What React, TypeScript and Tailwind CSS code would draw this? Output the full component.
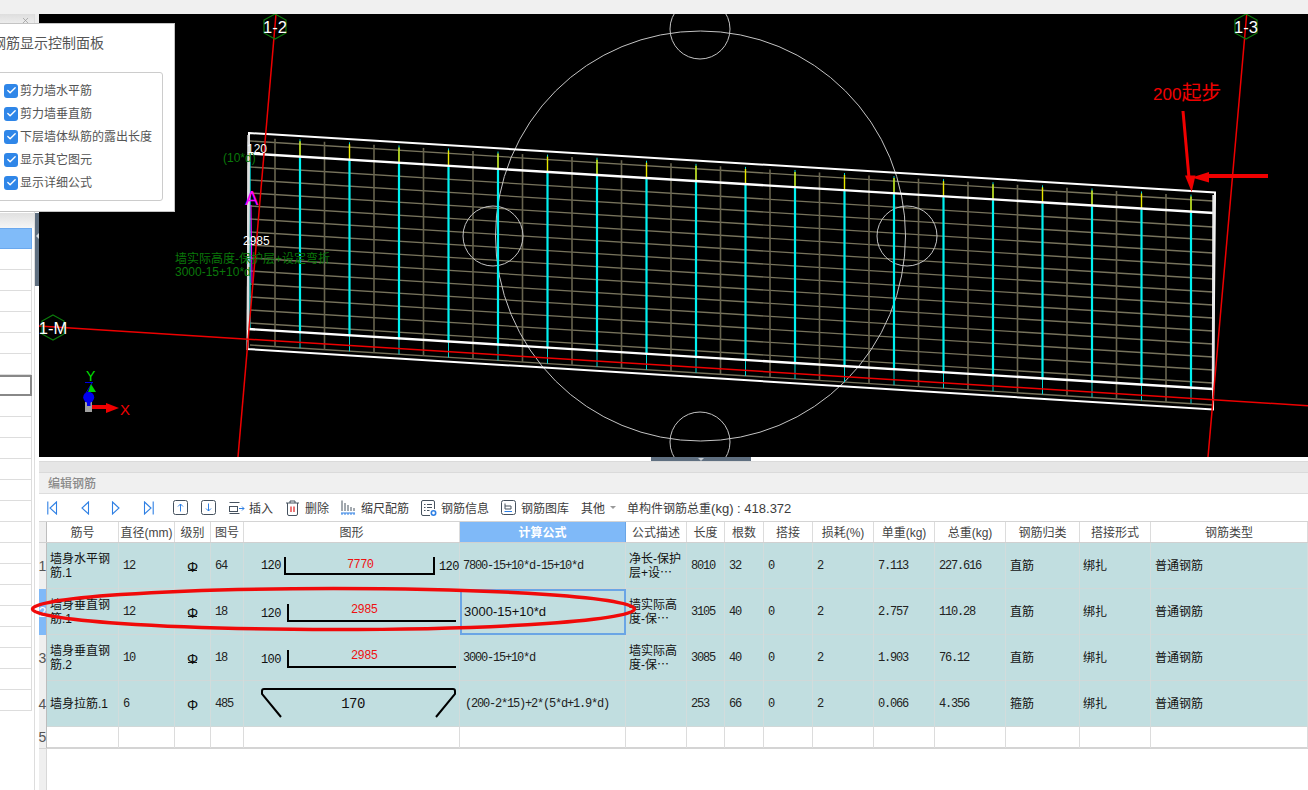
import React from "react";
import { Check, X } from "lucide-react";

const slope = 0.0621;
const topY = (x: number) => 133 + (x - 248) * slope;
const horizontals = [8, 34, 47, 60, 73, 86, 99, 112, 125, 138, 151, 164, 177, 190, 212];
const doubled = [1042, 1141];

function Hex({ cx, cy, label }: { cx: number; cy: number; label: string }) {
  const p = [[0, -12.5], [11, -6.5], [11, 6.5], [0, 12.5], [-11, 6.5], [-11, -6.5]]
    .map(([a, b]) => `${cx + a},${cy + b}`)
    .join(" ");
  return (
    <g>
      <polygon points={p} fill="none" stroke="#0c7c0c" strokeWidth="1.2" />
      <text x={cx} y={cy + 6.5} textAnchor="middle" fontSize="16.5" fill="#ffffff" fontFamily="'Liberation Sans',sans-serif">
        {label}
      </text>
    </g>
  );
}

function Drawing() {
  const cyan = Array.from({ length: 19 }, (_, i) => 300 + i * 49.5);
  const tan = Array.from({ length: 19 }, (_, i) => 275 + i * 49.5);
  return (
    <svg viewBox="39 14 1269 443" className="block w-[1269px] h-[443px] bg-black">
      {horizontals.map((o) => (
        <line key={o} x1="250" y1={133 + o} x2="1213" y2={133 + o + 60} stroke="#77735c" strokeWidth="1.3" />
      ))}
      {tan.map((x) => (
        <line key={x} x1={x} y1={topY(x) + 4} x2={x} y2={topY(x) + 212} stroke="#68644f" strokeWidth="1.6" />
      ))}
      <g fill="none" stroke="#c4c4c4" strokeWidth="1">
        <circle cx="700.5" cy="236" r="205" />
        <circle cx="700" cy="29" r="30" />
        <circle cx="700" cy="442" r="30" />
        <circle cx="493" cy="236" r="30" />
        <circle cx="907" cy="236" r="30" />
      </g>
      {cyan.map((x) => (
        <g key={x}>
          <line x1={x} y1={topY(x) + 3} x2={x} y2={topY(x) + 212} stroke="#00d8d8" strokeWidth="1" />
          <line x1={x} y1={topY(x) + 5} x2={x} y2={topY(x) + 20} stroke="#e8e800" strokeWidth="1.4" />
          {doubled.includes(x) ? (
            <g stroke="#00e4e4" strokeWidth="1">
              <line x1={x - 1} y1={topY(x) + 21} x2={x - 1} y2={topY(x) + 197} />
              <line x1={x + 1} y1={topY(x) + 21} x2={x + 1} y2={topY(x) + 197} />
            </g>
          ) : (
            <line x1={x} y1={topY(x) + 21} x2={x} y2={topY(x) + 197} stroke="#00f0f0" strokeWidth="2.2" />
          )}
        </g>
      ))}
      <line x1="250" y1="155" x2="250" y2="330" stroke="#00d8d8" strokeWidth="1.4" />
      <g stroke="#ffffff" fill="none">
        <polygon points="249,133 1215,192.5 1213,409.5 247.5,349" strokeWidth="2" />
        <line x1="249" y1="153.5" x2="1214" y2="213" strokeWidth="2.4" />
        <line x1="248" y1="329" x2="1213" y2="389" strokeWidth="2.4" />
        <line x1="1213.5" y1="195" x2="1213" y2="389" strokeWidth="2.4" stroke="#e8e8e8" />
        <line x1="248.5" y1="135" x2="248" y2="330" strokeWidth="2.4" stroke="#dddddd" />
      </g>
      <line x1="251" y1="205" x2="252" y2="283" stroke="#ff00ff" strokeWidth="1" />
      <g stroke="#ee0000" strokeWidth="1.5">
        <line x1="276" y1="14" x2="238" y2="457" />
        <line x1="1246.7" y1="14" x2="1208" y2="457" />
        <line x1="39" y1="326" x2="1308" y2="405.7" />
      </g>
      <Hex cx={275} cy={26.5} label="1-2" />
      <Hex cx={1246} cy={26.5} label="1-3" />
      <Hex cx={53} cy={327.5} label="1-M" />
      <g fontFamily="'Liberation Sans','Noto Sans CJK SC',sans-serif" fontSize="12">
        <text x="247" y="153" fill="#ffffff">120</text>
        <text x="243" y="245" fill="#ffffff">2985</text>
        <text x="223" y="162" fill="#0a780a">(10*d)</text>
        <text x="175" y="263" fill="#0a780a">墙实际高度-保护层+设定弯折</text>
        <text x="175" y="276" fill="#0a780a">3000-15+10*d</text>
        <text x="245" y="205" fill="#ff00ff" fontSize="20">A</text>
        <text x="1153" y="100" fill="#f00000">
          <tspan fontSize="17">200</tspan>
          <tspan fontSize="20">起步</tspan>
        </text>
        <text x="120" y="415" fill="#f00000" fontSize="15">X</text>
        <text x="86" y="381" fill="#00e000" fontSize="14">Y</text>
      </g>
      <g>
        <line x1="85" y1="382.5" x2="93" y2="382.5" stroke="#0000e0" strokeWidth="1" />
        <line x1="92" y1="383" x2="86" y2="393" stroke="#0000e0" strokeWidth="1" />
        <path d="M91 384 L96 392 L88 392 Z" fill="#00d000" />
        <rect x="85" y="402" width="7" height="10" fill="#a0a0a0" />
        <rect x="87" y="398" width="3.5" height="8" fill="#0000f0" />
        <circle cx="88.7" cy="397.3" r="5.5" fill="#0000f0" />
        <rect x="92" y="405" width="15" height="4" fill="#f00000" />
        <path d="M106 403 L119 408 L106 413 Z" fill="#f00000" />
      </g>
      <g fill="#f00000" stroke="none">
        <polygon points="1181.5,111 1184.5,111 1190.5,178 1187.5,178" />
        <polygon points="1185,175.5 1195.5,175.5 1191.7,192" />
        <rect x="1208" y="174" width="60" height="4" />
        <polygon points="1209,172 1209,182.5 1191.7,177.5" />
      </g>
    </svg>
  );
}

const blue = "#2f80e4";
const dark = "#46525f";

function NavIcon({ dir, bar }: { dir: "l" | "r"; bar: boolean }) {
  return (
    <svg width="11" height="14" viewBox="0 0 11 14" fill="none" stroke={blue} strokeWidth="1.1" className="block shrink-0">
      {dir === "l" ? <path d="M9.5 1 L3 7 L9.5 13 Z" /> : <path d="M1.5 1 L8 7 L1.5 13 Z" />}
      {bar && (dir === "l" ? <path d="M0.8 0.5 V13.5" /> : <path d="M10.2 0.5 V13.5" />)}
    </svg>
  );
}

function BoxArrow({ up }: { up: boolean }) {
  return (
    <svg width="15" height="15" viewBox="0 0 15 15" fill="none" className="block shrink-0">
      <rect x="0.5" y="0.5" width="14" height="14" rx="2" stroke={dark} />
      {up ? (
        <path d="M7.5 11.5 V4 M5 6.5 L7.5 4 L10 6.5" stroke={blue} />
      ) : (
        <path d="M7.5 3.5 V11 M5 8.5 L7.5 11 L10 8.5" stroke={blue} />
      )}
    </svg>
  );
}

function InsertIcon() {
  return (
    <svg width="16" height="14" viewBox="0 0 16 14" fill="none" className="block shrink-0">
      <path d="M0.5 1.5 H10.5" stroke={dark} />
      <rect x="0.5" y="5.5" width="8" height="5" stroke={dark} />
      <path d="M0.5 12.5 H10.5" stroke={dark} />
      <path d="M10 7.5 H15 M13 5.5 L15 7.5 L13 9.5" stroke={blue} />
    </svg>
  );
}

function TrashIcon() {
  return (
    <svg width="13" height="16" viewBox="0 0 13 16" fill="none" className="block shrink-0">
      <path d="M0 3 H13 M4 3 V1 H9 V3" stroke={dark} />
      <path d="M1.5 3 V14 Q1.5 15.5 3 15.5 H10 Q11.5 15.5 11.5 14 V3" stroke={dark} />
      <path d="M5 6.5 V12 M8 6.5 V12" stroke="#e02020" strokeWidth="1.2" />
    </svg>
  );
}

function ScaleIcon() {
  return (
    <svg width="14" height="15" viewBox="0 0 14 15" fill="none" className="block shrink-0">
      <path d="M1 0.5 V11 M4 3 V11 M7 5 V11 M10 7 V11 M13 8 V11" stroke={dark} />
      <path d="M0 13 H14 M1 13 V15 M4 13 V15 M7 13 V15 M10 13 V15 M13 13 V15" stroke={blue} />
    </svg>
  );
}

function InfoIcon() {
  return (
    <svg width="16" height="16" viewBox="0 0 16 16" fill="none" className="block shrink-0">
      <path d="M9 15.5 H2 Q0.5 15.5 0.5 14 V2 Q0.5 0.5 2 0.5 H12 Q13.5 0.5 13.5 2 V9" stroke={dark} />
      <path d="M3 4.5 H4.5 M6 4.5 H11 M3 7.5 H4.5 M6 7.5 H11 M3 10.5 H4.5 M6 10.5 H8.5" stroke={dark} />
      <circle cx="12.5" cy="13" r="2.2" stroke={blue} strokeWidth="1.6" />
    </svg>
  );
}

function LibIcon() {
  return (
    <svg width="15" height="15" viewBox="0 0 15 15" fill="none" className="block shrink-0">
      <rect x="0.5" y="0.5" width="14" height="14" rx="2" stroke={dark} />
      <path d="M4 3.5 V9 H10 V6 H4" stroke={dark} />
      <path d="M3.5 11.5 H11" stroke={blue} />
    </svg>
  );
}

function ToolLabel({ children }: { children: React.ReactNode }) {
  return <span className="mt-[2px] text-[12px] leading-[16px] text-[#3c3c3c] whitespace-nowrap">{children}</span>;
}

function Toolbar() {
  return (
    <div className="h-[28px] flex items-center bg-white border-b border-[#d4d4d4] pl-[8px]">
      <NavIcon dir="l" bar />
      <div className="ml-[21px]"><NavIcon dir="l" bar={false} /></div>
      <div className="ml-[21px]"><NavIcon dir="r" bar={false} /></div>
      <div className="ml-[21px]"><NavIcon dir="r" bar /></div>
      <div className="ml-[19px]"><BoxArrow up /></div>
      <div className="ml-[13px]"><BoxArrow up={false} /></div>
      <div className="ml-[13px] mr-[4px]"><InsertIcon /></div>
      <ToolLabel>插入</ToolLabel>
      <div className="ml-[13px] mr-[6px]"><TrashIcon /></div>
      <ToolLabel>删除</ToolLabel>
      <div className="ml-[12px] mr-[6px]"><ScaleIcon /></div>
      <ToolLabel>缩尺配筋</ToolLabel>
      <div className="ml-[12px] mr-[4px]"><InfoIcon /></div>
      <ToolLabel>钢筋信息</ToolLabel>
      <div className="ml-[12px] mr-[5px]"><LibIcon /></div>
      <ToolLabel>钢筋图库</ToolLabel>
      <div className="ml-[12px] flex"><ToolLabel>其他</ToolLabel></div>
      <div className="ml-[5px] w-0 h-0 border-l-[3px] border-r-[3px] border-t-[3px] border-l-transparent border-r-transparent border-t-[#999999]" />
      <div className="ml-[11px] mt-[2px] flex items-baseline whitespace-nowrap text-[#3c3c3c]">
        <span className="text-[12px]">单构件钢筋总重</span>
        <span className="text-[13px]">(kg) : 418.372</span>
      </div>
    </div>
  );
}

const gridCols =
  "grid grid-cols-[8px_72px_56px_36px_33px_216px_166px_61px_38px_39px_49px_61px_61px_71px_74px_71px_157px]";

const headers = ["筋号", "直径(mm)", "级别", "图号", "图形", "计算公式", "公式描述", "长度", "根数", "搭接", "损耗(%)", "单重(kg)", "总重(kg)", "钢筋归类", "搭接形式", "钢筋类型"];

function Num({ children }: { children: React.ReactNode }) {
  return (
    <div className="h-full flex items-center pl-[4px] border-r border-[#d2dcdc] font-['Liberation_Mono',monospace] text-[12px] tracking-[-1.2px] text-[#222222] whitespace-pre">
      {children}
    </div>
  );
}

function Txt({ children, pl = false }: { children: React.ReactNode; pl?: boolean }) {
  return (
    <div className={pl ? "h-full flex items-center pl-[3px] border-r border-[#d2dcdc] text-[12px] leading-[14px] text-[#111111] whitespace-pre-line" : "h-full flex items-center pl-[4px] border-r border-[#d2dcdc] text-[12px] leading-[14px] text-[#111111]"}>
      <div>{children}</div>
    </div>
  );
}

function Grade({ bar }: { bar: boolean }) {
  return (
    <div className="h-full flex items-center justify-center border-r border-[#d2dcdc] text-[#111111]">
      <span className="relative mt-[2px] text-[14px] leading-[14px] font-['Liberation_Sans',sans-serif]">
        Φ
        {bar && <span className="absolute left-[1px] right-[1px] bottom-[3px] h-px bg-[#111111]" />}
      </span>
    </div>
  );
}

const dimText = "'Liberation Mono',monospace";

function DimText({ x, y, fill = "#111111", children }: { x: number; y: number; fill?: string; children: React.ReactNode }) {
  return (
    <text x={x} y={y} fontSize="12" letterSpacing="-0.6" fontFamily={dimText} fill={fill}>
      {children}
    </text>
  );
}

function Shape({ kind }: { kind: number }) {
  return (
    <div className="h-full border-r border-[#d2dcdc]">
      <svg width="216" height="46" viewBox="0 0 216 46" fill="none" className="block">
        {kind === 1 && (
          <g>
            <DimText x={17} y={26}>120</DimText>
            <path d="M41 14 V31 H190 V14" stroke="#000" strokeWidth="2" />
            <DimText x={103} y={25} fill="#ee1111">7770</DimText>
            <DimText x={195} y={27}>120</DimText>
          </g>
        )}
        {kind === 2 && (
          <g>
            <DimText x={17} y={28}>120</DimText>
            <path d="M44 15 V32 H212" stroke="#000" strokeWidth="2" />
            <DimText x={107} y={24} fill="#ee1111">2985</DimText>
          </g>
        )}
        {kind === 3 && (
          <g>
            <DimText x={17} y={28}>100</DimText>
            <path d="M44 15 V32 H212" stroke="#000" strokeWidth="2" />
            <DimText x={107} y={24} fill="#ee1111">2985</DimText>
          </g>
        )}
        {kind === 4 && (
          <g>
            <path d="M37 36 L18 13 V10 Q18 8 20 8 H209 Q211 8 211 10 V13 L192 36" stroke="#000" strokeWidth="2" />
            <text x="109" y="27" textAnchor="middle" fontSize="14" letterSpacing="-0.6" fontFamily={dimText} fill="#111111">170</text>
          </g>
        )}
      </svg>
    </div>
  );
}

const rows = [
  { no: "1", name: "墙身水平钢筋.1", d: "12", bar: true, fig: "64", kind: 1, f: "7800-15+10*d-15+10*d", desc: "净长-保护\n层+设⋯", len: "8010", cnt: "32", w1: "7.113", w2: "227.616", c1: "直筋" },
  { no: "2", name: "墙身垂直钢筋.1", d: "12", bar: true, fig: "18", kind: 2, f: "3000-15+10*d", desc: "墙实际高\n度-保⋯", len: "3105", cnt: "40", w1: "2.757", w2: "110.28", c1: "直筋" },
  { no: "3", name: "墙身垂直钢筋.2", d: "10", bar: true, fig: "18", kind: 3, f: "3000-15+10*d", desc: "墙实际高\n度-保⋯", len: "3085", cnt: "40", w1: "1.903", w2: "76.12", c1: "直筋" },
  { no: "4", name: "墙身拉筋.1", d: "6", bar: false, fig: "485", kind: 4, f: "(200-2*15)+2*(5*d+1.9*d)", desc: "", len: "253", cnt: "66", w1: "0.066", w2: "4.356", c1: "箍筋" },
];

function Gutter({ children, active = false }: { children?: React.ReactNode; active?: boolean }) {
  return (
    <div className={active ? "h-full flex items-center justify-center bg-[#7fb9f8] border-r border-[#bdbdbd] text-[14px] text-white font-['Liberation_Sans',sans-serif]" : "h-full flex items-center justify-center bg-[#efefef] border-r border-[#bdbdbd] text-[14px] text-[#555555] font-['Liberation_Sans',sans-serif]"}>
      {children}
    </div>
  );
}

function Table() {
  return (
    <div className="flex-1 flex flex-col bg-white relative">
      <div className={`${gridCols} h-[21px] border-b border-[#d0d0d0]`}>
        <Gutter />
        {headers.map((h, i) =>
          i === 5 ? (
            <div key={h} className="h-full flex items-center justify-center pt-[2px] bg-[#7fb9f8] text-white font-bold text-[12px] border-r border-[#6aa5e5]">{h}</div>
          ) : (
            <div key={h} className="h-full flex items-center justify-center pt-[2px] border-r border-[#dcdcdc] text-[12px] text-[#444444] whitespace-nowrap">{h}</div>
          )
        )}
      </div>
      {rows.map((r) => (
        <div key={r.no} className={`${gridCols} h-[46px] bg-[#c1dee0] border-b border-[#d0d8d8]`}>
          <Gutter active={r.no === "2"}>{r.no}</Gutter>
          <Txt pl>{r.name}</Txt>
          <Num>{r.d}</Num>
          <Grade bar={r.bar} />
          <Num>{r.fig}</Num>
          <Shape kind={r.kind} />
          {r.no === "2" ? (
            <div className="h-full flex items-center pl-[2px] border-2 border-[#6aa5e5] text-[13px] text-[#111111] font-['Liberation_Sans',sans-serif]">{r.f}</div>
          ) : (
            <div className={r.no === "4" ? "h-full flex items-center pl-[5px] border-r border-[#d2dcdc] font-['Liberation_Mono',monospace] text-[12px] tracking-[-1.2px] text-[#222222] whitespace-pre" : "h-full flex items-center pl-[3px] border-r border-[#d2dcdc] font-['Liberation_Mono',monospace] text-[12px] tracking-[-1.2px] text-[#222222] whitespace-pre"}>{r.f}</div>
          )}
          <Txt pl>{r.desc}</Txt>
          <Num>{r.len}</Num>
          <Num>{r.cnt}</Num>
          <Num>0</Num>
          <Num>2</Num>
          <Num>{r.w1}</Num>
          <Num>{r.w2}</Num>
          <Txt>{r.c1}</Txt>
          <Txt pl>绑扎</Txt>
          <Txt>普通钢筋</Txt>
        </div>
      ))}
      <div className={`${gridCols} h-[22px] border-b-2 border-[#d4d4d4]`}>
        <Gutter>5</Gutter>
        {headers.map((h) => (
          <div key={h} className="h-full border-r border-[#dcdcdc]" />
        ))}
      </div>
      <div className="flex-1 w-[8px] bg-[#efefef] border-r border-[#d8d8d8]" />
    </div>
  );
}

const popupItems = ["剪力墙水平筋", "剪力墙垂直筋", "下层墙体纵筋的露出长度", "显示其它图元", "显示详细公式"];

function Popup() {
  return (
    <div className="absolute left-0 top-[23px] w-[175px] h-[189px] bg-white border-r border-y border-[#c4c4c4] overflow-hidden">
      <div className="ml-[-8px] mt-[9px] text-[14px] leading-[20px] text-[#555555] whitespace-nowrap">钢筋显示控制面板</div>
      <div className="ml-[-10px] mt-[19px] w-[173px] h-[129px] border border-[#cccccc] rounded-[3px] pt-[6px] pl-[13px] flex flex-col">
        {popupItems.map((t) => (
          <div key={t} className="h-[23px] flex items-center gap-[2px] shrink-0">
            <span className="w-[14px] h-[14px] rounded-[3px] bg-[#2f86e8] flex items-center justify-center">
              <Check size={11} strokeWidth={3} color="#ffffff" />
            </span>
            <span className="text-[12px] text-[#555555] whitespace-nowrap">{t}</span>
          </div>
        ))}
      </div>
    </div>
  );
}

function LeftPanel() {
  const listRows = Array.from({ length: 22 }, (_, i) => i);
  return (
    <div className="w-[39px] shrink-0 flex bg-white">
      <div className="w-[35px] flex flex-col border-r border-[#dddddd]">
        <div className="h-[9px] bg-gradient-to-b from-[#dedede] to-[#ececec] flex justify-end items-start pt-[2px] pr-[4px]">
          <X size={9} color="#999999" />
        </div>
        <div className="h-[190px]" />
        <div className="h-[15px] bg-gradient-to-b from-[#e0e0e0] to-[#f6f6f6]" />
        <div className="h-[21px] w-[32px] bg-[#80bbf9] border-y border-r border-[#6aa8ee]" />
        {listRows.map((i) =>
          i === 6 ? (
            <div key={i} className="h-[21px] w-[32px] border-y-2 border-r-2 border-[#888888]" />
          ) : (
            <div key={i} className="h-[21px] w-[32px] border-b border-r border-[#dddddd]" />
          )
        )}
        <div className="flex-1 w-[32px]" />
      </div>
      <div className="w-[4px] flex flex-col">
        <div className="h-[9px] bg-[#ececec]" />
        <div className="h-[190px]" />
        <div className="h-[73px] bg-[#5f6f80] flex flex-col items-end pt-[20px]">
          <div className="w-0 h-0 border-y-[3px] border-r-[3px] border-y-transparent border-r-[#d8dde2]" />
        </div>
      </div>
    </div>
  );
}

export default function App() {
  return (
    <div className="relative w-[1308px] h-[790px] overflow-hidden bg-white font-['Liberation_Sans','Noto_Sans_CJK_SC',sans-serif]">
      <div className="h-[14px] bg-[#f0f0f0]" />
      <div className="flex h-[776px]">
        <LeftPanel />
        <div className="flex-1 flex flex-col min-w-0">
          <Drawing />
          <div className="h-[4px] bg-white pl-[612px]">
            <div className="w-[100px] h-[4px] bg-[#5f6f80] flex justify-center">
              <div className="w-0 h-0 mt-[1px] border-x-[3px] border-t-[3px] border-x-transparent border-t-[#c8ced4]" />
            </div>
          </div>
          <div className="h-[12px] bg-[#e6e6e6] border-y border-[#dadada]" />
          <div className="h-[21px] bg-[#f0f0f0] border-b border-[#dddddd] pl-[9px] pt-[2px] flex items-center text-[12px] text-[#8a8a8a] font-medium">编辑钢筋</div>
          <Toolbar />
          <Table />
        </div>
      </div>
      <Popup />
      <svg width="1308" height="790" viewBox="0 0 1308 790" fill="none" className="absolute left-0 top-0 pointer-events-none">
        <ellipse cx="333.5" cy="609" rx="301" ry="20.5" stroke="#f00a0a" strokeWidth="3.5" />
      </svg>
    </div>
  );
}
